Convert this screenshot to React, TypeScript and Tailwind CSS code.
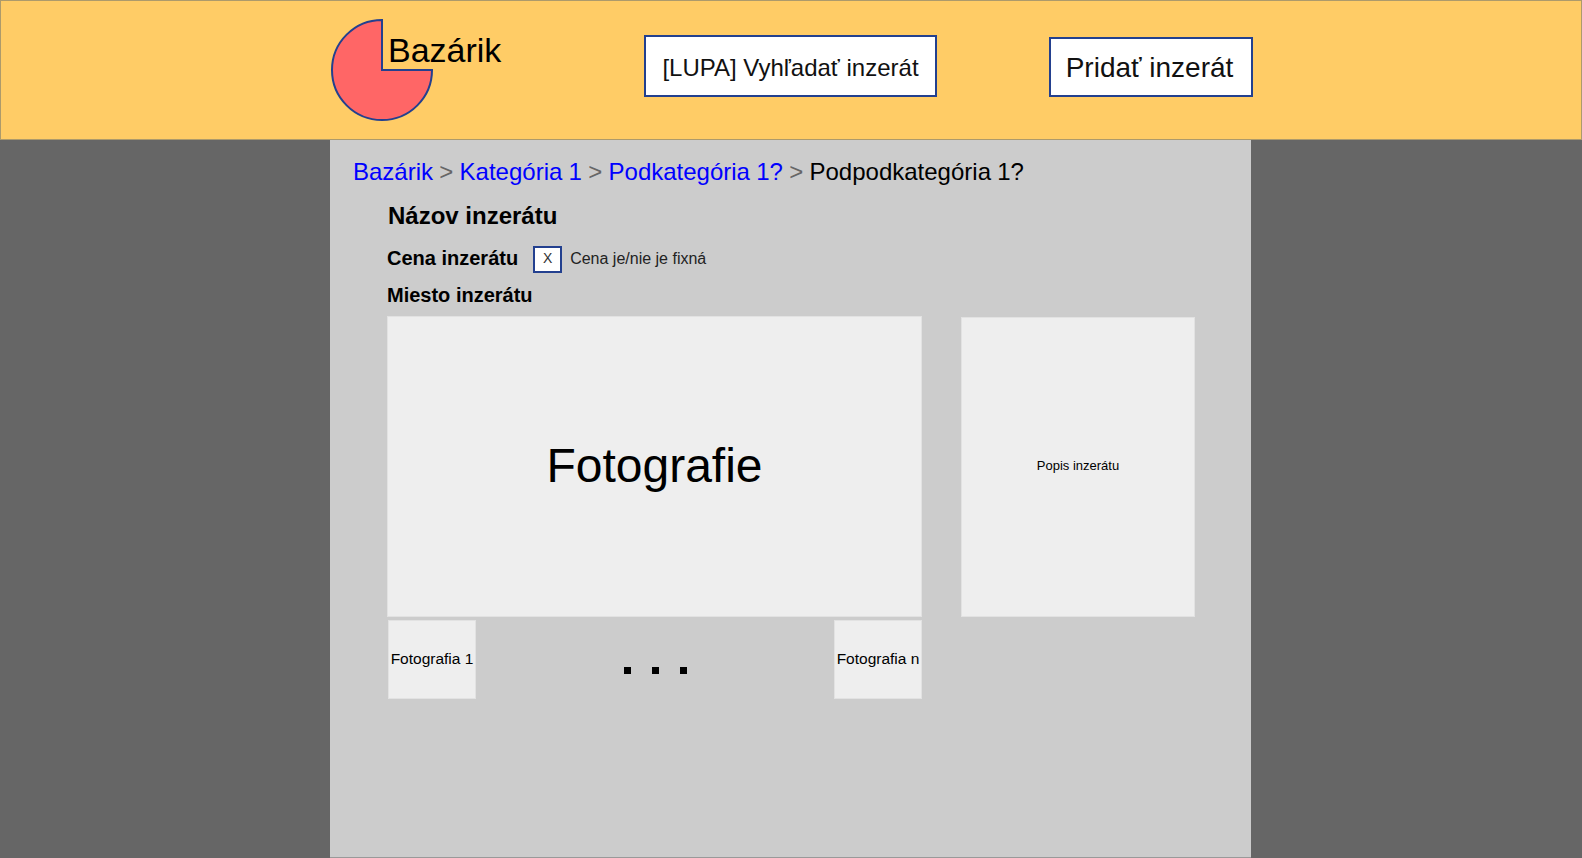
const ARIAL = 'font-["Liberation_Sans",Arial,sans-serif]'

function Logo() {
  return (
    <div className="relative w-[313px] h-[103px] mt-[18px] shrink-0">
      <svg width="103" height="103" viewBox="0 0 103 103" className="block">
        <path
          d="M51 1 A50 50 0 1 0 101 51 L51 51 Z"
          fill="#ff6666"
          stroke="#23408f"
          strokeWidth="2"
        />
      </svg>
      <span className="absolute left-[57px] top-[12px] text-[34px] leading-[38px] text-black">Bazárik</span>
    </div>
  )
}

function Header() {
  return (
    <header className="h-[140px] shrink-0 bg-[#ffcc66] border border-[#ad9a6b]">
      <div className="flex items-start ml-[330px] w-[921px]">
        <Logo />
        <button className="w-[293px] h-[62px] mt-[34px] pt-[3px] shrink-0 bg-white border-2 border-[#23408f] text-[24px] text-[#111]">
          [LUPA] Vyhľadať inzerát
        </button>
        <button className="w-[204px] h-[60px] mt-[36px] ml-[112px] pt-[1px] pr-[3px] shrink-0 bg-white border-2 border-[#23408f] text-[28px] text-[#111]">
          Pridať inzerát
        </button>
      </div>
    </header>
  )
}

function Thumb({ label }: { label: string }) {
  return (
    <div className="w-[88px] h-[79px] shrink-0 flex items-center justify-center pb-[2px] bg-[#eeeeee] border border-[#e2e2e2] text-[15.5px] text-black whitespace-nowrap">
      {label}
    </div>
  )
}

export default function App() {
  return (
    <div className={`${ARIAL} flex flex-col h-screen overflow-hidden bg-[#666666]`}>
      <Header />
      <main className="flex-1 ml-[330px] w-[921px] bg-[#cccccc] border-b border-[#999]">
        <nav className="pl-[23px] pt-[16px] h-[59px] text-[24px] leading-[32px] text-[#666] [word-spacing:-0.4px]">
          <a className="text-[#0000ff]">Bazárik</a> &gt; <a className="text-[#0000ff]">Kategória 1</a> &gt;{' '}
          <a className="text-[#0000ff]">Podkategória 1?</a> &gt; <span className="text-black">Podpodkategória 1?</span>
        </nav>
        <div className="pl-[57px]">
          <h1 className="pl-[1px] font-bold text-[24px] leading-[28px] pt-[3px] text-black">Názov inzerátu</h1>
          <div className="flex items-center h-[28px] mt-[15px]">
            <span className="font-bold text-[20px] text-black leading-[24px] pb-[3px]">Cena inzerátu</span>
            <div className="w-[29px] h-[27px] ml-[15px] bg-white border-2 border-[#23408f] flex items-center justify-center text-[14px] text-[#333] leading-none pb-[3px]">
              X
            </div>
            <span className="ml-[8px] text-[16px] text-[#222]">Cena je/nie je fixná</span>
          </div>
          <p className="font-bold text-[20px] leading-[24px] mt-[10px] text-black">Miesto inzerátu</p>
          <div className="flex items-start gap-[39px] mt-[9px]">
            <div className="w-[535px] shrink-0">
              <div className="h-[301px] flex items-center justify-center pb-[2px] bg-[#eeeeee] border border-[#e2e2e2] text-[48px] text-black">
                Fotografie
              </div>
              <div className="flex items-center justify-between pl-[1px] mt-[3px]">
                <Thumb label="Fotografia 1" />
                <div className="flex gap-[21px] mt-[22px]">
                  <span className="w-[7px] h-[7px] bg-black" />
                  <span className="w-[7px] h-[7px] bg-black" />
                  <span className="w-[7px] h-[7px] bg-black" />
                </div>
                <Thumb label="Fotografia n" />
              </div>
            </div>
            <div className="w-[234px] h-[300px] mt-[1px] shrink-0 flex items-center justify-center pb-[2px] bg-[#eeeeee] border border-[#e2e2e2] text-[13px] text-black">
              Popis inzerátu
            </div>
          </div>
        </div>
      </main>
    </div>
  )
}
